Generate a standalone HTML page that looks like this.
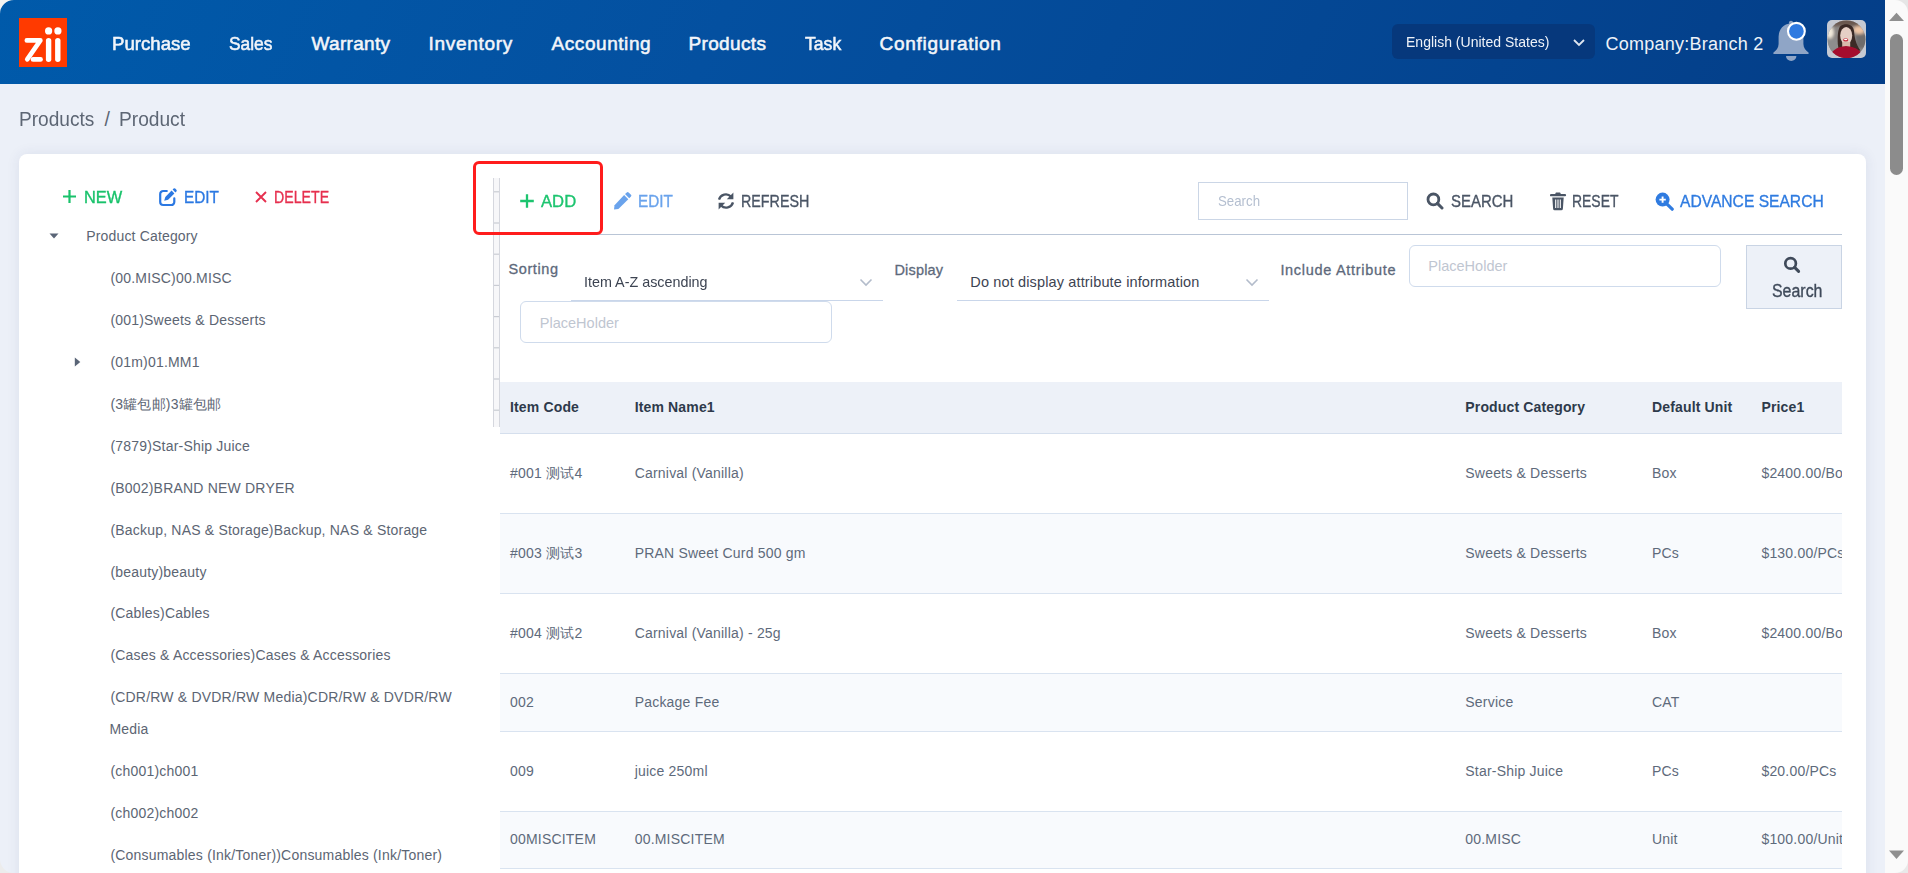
<!DOCTYPE html><html><head><meta charset="utf-8"><title>Product</title><style>
html,body{margin:0;padding:0;width:1908px;height:873px;overflow:hidden;background:#ecf0f8;font-family:"Liberation Sans",sans-serif}
.t{position:absolute;white-space:pre;line-height:normal}
.b{position:absolute;box-sizing:border-box}
</style></head><body>
<div class="b" style="left:0px;top:0px;width:1885px;height:84px;background:linear-gradient(115deg,#005aaa 0%,#0450a0 38%,#043e88 100%)"></div>
<svg class="b" style="left:0px;top:0px" width="14" height="14" viewBox="0 0 14 14"><path d="M0 0H14A14 14 0 0 0 0 14Z" fill="#f4f4f2"/></svg>
<div class="b" style="left:19px;top:18px;width:48px;height:49px;background:#ff3a00"></div>
<svg class="b" style="left:19px;top:18px" width="48" height="49" viewBox="0 0 48 49"><g fill="none" stroke="#fff" stroke-linecap="round" stroke-linejoin="round" stroke-width="4.6"><path d="M7.8 22.4H21.4L8.2 41.4"/><path d="M14 41.4H21.6"/><path d="M29.6 22.6V41.2" stroke-width="5.4"/><path d="M38.8 22.6V41.2" stroke-width="5.4"/></g><circle cx="29.6" cy="12.9" r="3.6" fill="#fff"/><circle cx="38.9" cy="12.9" r="3.6" fill="#fff"/></svg>
<div class="t" style="left:111.62px;top:33px;font-size:19px;font-weight:400;color:#f2f5fa;transform:scaleX(0.9809);transform-origin:0 0;-webkit-text-stroke:0.55px">Purchase</div>
<div class="t" style="left:228.90px;top:33px;font-size:19px;font-weight:400;color:#f2f5fa;transform:scaleX(0.9144);transform-origin:0 0;-webkit-text-stroke:0.55px">Sales</div>
<div class="t" style="left:311.50px;top:33px;font-size:19px;font-weight:400;color:#f2f5fa;letter-spacing:0.320px;-webkit-text-stroke:0.55px">Warranty</div>
<div class="t" style="left:428.60px;top:33px;font-size:19px;font-weight:400;color:#f2f5fa;letter-spacing:0.693px;-webkit-text-stroke:0.55px">Inventory</div>
<div class="t" style="left:551.60px;top:33px;font-size:19px;font-weight:400;color:#f2f5fa;letter-spacing:0.551px;-webkit-text-stroke:0.55px">Accounting</div>
<div class="t" style="left:688.40px;top:33px;font-size:19px;font-weight:400;color:#f2f5fa;letter-spacing:0.374px;-webkit-text-stroke:0.55px">Products</div>
<div class="t" style="left:804.70px;top:33px;font-size:19px;font-weight:400;color:#f2f5fa;transform:scaleX(0.9275);transform-origin:0 0;-webkit-text-stroke:0.55px">Task</div>
<div class="t" style="left:879.60px;top:33px;font-size:19px;font-weight:400;color:#f2f5fa;letter-spacing:0.688px;-webkit-text-stroke:0.55px">Configuration</div>
<div class="b" style="left:1392px;top:24px;width:203px;height:35px;background:#06387c;border-radius:6px"></div>
<div class="t" style="left:1405.73px;top:34px;font-size:14.5px;font-weight:400;color:#eef2f8;transform:scaleX(0.9668);transform-origin:0 0">English (United States)</div>
<svg class="b" style="left:1572px;top:38px" width="14" height="10" viewBox="0 0 14 10"><path d="M2 2L7 7L12 2" fill="none" stroke="#dfe6f0" stroke-width="1.8"/></svg>
<div class="t" style="left:1605.60px;top:34px;font-size:18px;font-weight:400;color:#eef2f8;letter-spacing:0.235px">Company:Branch 2</div>
<svg class="b" style="left:1772px;top:19px" width="40" height="44" viewBox="0 0 40 44"><path d="M19 4.6C11.6 4.9 6.8 10.2 6.6 17.6V25C6.5 29 4.2 31.5 1.8 33.3C0.8 34.1 1.2 35 2.4 35H35.6C36.8 35 37.2 34.1 36.2 33.3C33.8 31.5 31.5 29 31.4 25V17.6C31.2 10.2 26.4 4.9 19 4.6Z" fill="#8fa5c6"/><circle cx="19" cy="3.8" r="2.1" fill="#8fa5c6"/><path d="M14 37H24.4A5.2 5 0 0 1 14 37Z" fill="#8fa5c6"/><circle cx="24.4" cy="12.3" r="8.4" fill="#2f7ae0" stroke="#fff" stroke-width="2.1"/></svg>
<div class="b" style="left:1827px;top:20px;width:39px;height:38px;background:#c6cad3;border-radius:5px"></div>
<svg class="b" style="left:1827px;top:20px" width="39" height="38" viewBox="0 0 39 38"><defs><clipPath id="av"><circle cx="19.5" cy="19.3" r="18.9"/></clipPath><filter id="bl" x="-30%" y="-30%" width="160%" height="160%"><feGaussianBlur stdDeviation="1.4"/></filter><filter id="bl2" x="-30%" y="-30%" width="160%" height="160%"><feGaussianBlur stdDeviation="0.55"/></filter></defs><g clip-path="url(#av)"><rect width="39" height="38" fill="#8a8684"/><g filter="url(#bl)"><rect x="-2" y="-2" width="43" height="8" fill="#6a5850"/><ellipse cx="3" cy="12.5" rx="4" ry="6" fill="#f2eadb"/><ellipse cx="32" cy="10" rx="6" ry="4" fill="#f0c6a6"/><rect x="-2" y="19" width="14" height="12" fill="#8e8e8e"/><rect x="29" y="14" width="12" height="14" fill="#6e6c6c"/></g><g filter="url(#bl2)"><path d="M10.8 24C10.5 16 10.8 9 13.5 6C15.5 4.3 18 4 20 4.2C24 4.5 26.5 7 27 11C27.6 17 28.5 24 33.5 30.5L24 32H12Z" fill="#3a2a25"/><ellipse cx="19.2" cy="15.6" rx="6" ry="8.6" fill="#e6d0c6"/><rect x="15.2" y="22" width="8" height="5.5" fill="#d9b9aa"/><ellipse cx="18.7" cy="19.9" rx="2.6" ry="1.7" fill="#c62a3a"/><ellipse cx="18.7" cy="19.5" rx="1.7" ry="0.75" fill="#fff"/><path d="M1 40C3 32 9 26.5 19 26C29 26.5 35 31 38 40Z" fill="#a50f2e"/></g></g></svg>
<div class="b" style="left:1885px;top:0px;width:23px;height:873px;background:#fafafa"></div>
<svg class="b" style="left:1885px;top:0px" width="23" height="873" viewBox="0 0 23 873"><path d="M4 21L11.5 12.8L19 21Z" fill="#8f8f8f"/><rect x="5" y="34" width="13" height="141" rx="6.5" fill="#8c8c8c"/><path d="M4 850.5L11.5 859L19 850.5Z" fill="#8f8f8f"/><path d="M10 0A13 13 0 0 1 23 13V0Z" fill="#e6e6e6"/><path d="M23 860A13 13 0 0 1 10 873H23Z" fill="#e9e9e9"/></svg>
<div class="t" style="left:18.82px;top:108px;font-size:19.5px;font-weight:400;color:#5d6674;transform:scaleX(0.9790);transform-origin:0 0">Products</div>
<div class="t" style="left:104.40px;top:108px;font-size:19.5px;font-weight:400;color:#5d6674">/</div>
<div class="t" style="left:119.02px;top:108px;font-size:19.5px;font-weight:400;color:#5d6674;transform:scaleX(0.9823);transform-origin:0 0">Product</div>
<div class="b" style="left:19px;top:154px;width:1847px;height:746px;background:#fff;border-radius:8px;box-shadow:0 0 14px rgba(40,60,110,.09)"></div>
<svg class="b" style="left:62px;top:189px" width="15" height="15" viewBox="0 0 15 15"><path d="M7.5 1V14M1 7.5H14" stroke="#19c26b" stroke-width="2.2" fill="none"/></svg>
<div class="t" style="left:84.24px;top:188px;font-size:17px;font-weight:400;color:#19c26b;transform:scaleX(0.9633);transform-origin:0 0;-webkit-text-stroke:0.35px">NEW</div>
<svg class="b" style="left:159px;top:188px" width="19" height="19" viewBox="0 0 19 19"><path d="M7.8 3H4.2A3 3 0 0 0 1.2 6V14A3 3 0 0 0 4.2 17H12.3A3 3 0 0 0 15.3 14V10.4" fill="none" stroke="#2b78e2" stroke-width="2.2" stroke-linecap="round"/><path d="M5.2 12.8L6.3 8.9L12.6 2.6L15.4 5.4L9.1 11.7Z" fill="#2b78e2"/><path d="M13.6 1.6L14.6 0.6Q15.4 -0.1 16.2 0.6L17.4 1.8Q18.1 2.6 17.4 3.4L16.4 4.4Z" fill="#2b78e2"/></svg>
<div class="t" style="left:183.80px;top:188px;font-size:17px;font-weight:400;color:#2b78e2;transform:scaleX(0.9025);transform-origin:0 0;-webkit-text-stroke:0.35px">EDIT</div>
<svg class="b" style="left:255px;top:191px" width="12" height="12" viewBox="0 0 12 12"><path d="M1 1L11 11M11 1L1 11" stroke="#e6304f" stroke-width="1.9" fill="none"/></svg>
<div class="t" style="left:273.77px;top:188px;font-size:17px;font-weight:400;color:#e6304f;transform:scaleX(0.8334);transform-origin:0 0;-webkit-text-stroke:0.35px">DELETE</div>
<svg class="b" style="left:49px;top:233px" width="10" height="6" viewBox="0 0 10 6"><path d="M0.5 0.5H9.5L5 5.5Z" fill="#5a6577"/></svg>
<div class="t" style="left:86.30px;top:228px;font-size:14px;font-weight:400;color:#5c6573;letter-spacing:0.157px">Product Category</div>
<div class="t" style="left:110.40px;top:270px;font-size:14px;font-weight:400;color:#5c6573;letter-spacing:0.2px">(00.MISC)00.MISC</div>
<div class="t" style="left:110.40px;top:312px;font-size:14px;font-weight:400;color:#5c6573;letter-spacing:0.2px">(001)Sweets &amp; Desserts</div>
<div class="t" style="left:110.40px;top:354px;font-size:14px;font-weight:400;color:#5c6573;letter-spacing:0.2px">(01m)01.MM1</div>
<div class="t" style="left:110.40px;top:396px;font-size:14px;font-weight:400;color:#5c6573;letter-spacing:0.2px">(3罐包邮)3罐包邮</div>
<div class="t" style="left:110.40px;top:438px;font-size:14px;font-weight:400;color:#5c6573;letter-spacing:0.2px">(7879)Star-Ship Juice</div>
<div class="t" style="left:110.40px;top:480px;font-size:14px;font-weight:400;color:#5c6573;letter-spacing:0.2px">(B002)BRAND NEW DRYER</div>
<div class="t" style="left:110.40px;top:522px;font-size:14px;font-weight:400;color:#5c6573;letter-spacing:0.2px">(Backup, NAS &amp; Storage)Backup, NAS &amp; Storage</div>
<div class="t" style="left:110.40px;top:564px;font-size:14px;font-weight:400;color:#5c6573;letter-spacing:0.2px">(beauty)beauty</div>
<div class="t" style="left:110.40px;top:605px;font-size:14px;font-weight:400;color:#5c6573;letter-spacing:0.2px">(Cables)Cables</div>
<div class="t" style="left:110.40px;top:647px;font-size:14px;font-weight:400;color:#5c6573;letter-spacing:0.2px">(Cases &amp; Accessories)Cases &amp; Accessories</div>
<div class="t" style="left:110.40px;top:689px;font-size:14px;font-weight:400;color:#5c6573;letter-spacing:0.2px">(CDR/RW &amp; DVDR/RW Media)CDR/RW &amp; DVDR/RW</div>
<div class="t" style="left:109.40px;top:721px;font-size:14px;font-weight:400;color:#5c6573;letter-spacing:0.2px">Media</div>
<div class="t" style="left:110.40px;top:763px;font-size:14px;font-weight:400;color:#5c6573;letter-spacing:0.2px">(ch001)ch001</div>
<div class="t" style="left:110.40px;top:805px;font-size:14px;font-weight:400;color:#5c6573;letter-spacing:0.2px">(ch002)ch002</div>
<div class="t" style="left:110.40px;top:847px;font-size:14px;font-weight:400;color:#5c6573;letter-spacing:0.2px">(Consumables (Ink/Toner))Consumables (Ink/Toner)</div>
<svg class="b" style="left:74px;top:357px" width="7" height="10" viewBox="0 0 7 10"><path d="M0.8 0.5V9.5L6.3 5Z" fill="#5a6577"/></svg>
<svg class="b" style="left:493px;top:178px" width="8" height="249" viewBox="0 0 8 249"><rect x="1" y="0" width="5" height="249" fill="#f7f7f9"/><rect x="0" y="0" width="1" height="249" fill="#d5d7de"/><rect x="6" y="0" width="1" height="249" fill="#d5d7de"/><path d="M1 13.8H6" stroke="#c9ccd3" stroke-width="1.2"/><path d="M1 45.0H6" stroke="#c9ccd3" stroke-width="1.2"/><path d="M1 76.2H6" stroke="#c9ccd3" stroke-width="1.2"/><path d="M1 107.4H6" stroke="#c9ccd3" stroke-width="1.2"/><path d="M1 138.6H6" stroke="#c9ccd3" stroke-width="1.2"/><path d="M1 169.8H6" stroke="#c9ccd3" stroke-width="1.2"/><path d="M1 201.0H6" stroke="#c9ccd3" stroke-width="1.2"/><path d="M1 232.2H6" stroke="#c9ccd3" stroke-width="1.2"/></svg>
<svg class="b" style="left:519px;top:193px" width="16" height="16" viewBox="0 0 16 16"><path d="M8 1.2V14.8M1.2 8H14.8" stroke="#1dc46f" stroke-width="2.3" fill="none"/></svg>
<div class="t" style="left:541.40px;top:192px;font-size:17px;font-weight:400;color:#1dc46f;transform:scaleX(0.9799);transform-origin:0 0;-webkit-text-stroke:0.35px">ADD</div>
<svg class="b" style="left:613px;top:191px" width="19" height="19" viewBox="0 0 19 19"><path d="M15.6 1.4L18 3.8A1.2 1.2 0 0 1 18 5.5L16.2 7.3L12 3.1L13.8 1.4A1.2 1.2 0 0 1 15.6 1.4Z" fill="#6aa3ec"/><path d="M11.1 4L15.3 8.2L5.4 18.1L1 18.6L1.5 14.2Z" fill="#6aa3ec"/></svg>
<div class="t" style="left:637.70px;top:192px;font-size:17px;font-weight:400;color:#6aa3ec;transform:scaleX(0.8999);transform-origin:0 0;-webkit-text-stroke:0.35px">EDIT</div>
<svg class="b" style="left:717px;top:192px" width="18" height="18" viewBox="0 0 18 18"><g fill="none" stroke="#4a5565" stroke-width="2.3"><path d="M2 7.6A7.1 7.1 0 0 1 14 4.6"/><path d="M16 10.4A7.1 7.1 0 0 1 4 13.4"/></g><path d="M16.4 0.6V7.2H9.8Z" fill="#4a5565"/><path d="M1.6 17.4V10.8H8.2Z" fill="#4a5565"/></svg>
<div class="t" style="left:741.16px;top:192px;font-size:17px;font-weight:400;color:#4a5565;transform:scaleX(0.8410);transform-origin:0 0;-webkit-text-stroke:0.35px">REFRESH</div>
<div class="b" style="left:1198px;top:182px;width:210px;height:38px;border:1px solid #cbd6e6;background:#fff"></div>
<div class="t" style="left:1218.20px;top:192px;font-size:15px;font-weight:400;color:#b4bfd0;transform:scaleX(0.8838);transform-origin:0 0">Search</div>
<svg class="b" style="left:1426px;top:192px" width="18" height="18" viewBox="0 0 18 18"><circle cx="7.4" cy="7.4" r="5.4" fill="none" stroke="#4a5565" stroke-width="2.8"/><path d="M11.4 11.4L16 16" stroke="#4a5565" stroke-width="3" stroke-linecap="round"/></svg>
<div class="t" style="left:1451.00px;top:192px;font-size:17px;font-weight:400;color:#4a5565;transform:scaleX(0.8797);transform-origin:0 0;-webkit-text-stroke:0.35px">SEARCH</div>
<svg class="b" style="left:1549.5px;top:192px" width="17" height="19" viewBox="0 0 17 19"><path d="M1 3.2H15" stroke="#4a5565" stroke-width="2.2" stroke-linecap="round"/><path d="M5.6 2.6L6.3 1H9.7L10.4 2.6" fill="#4a5565" stroke="#4a5565" stroke-width="1.2"/><path d="M2.3 5.4H13.7L12.9 16.8A1.6 1.6 0 0 1 11.3 18.3H4.7A1.6 1.6 0 0 1 3.1 16.8Z" fill="#4a5565"/><path d="M5.7 7.6V16M8 7.6V16M10.3 7.6V16" stroke="#fff" stroke-width="1.1"/></svg>
<div class="t" style="left:1571.58px;top:192px;font-size:17px;font-weight:400;color:#4a5565;transform:scaleX(0.8193);transform-origin:0 0;-webkit-text-stroke:0.35px">RESET</div>
<svg class="b" style="left:1654.5px;top:192px" width="19" height="19" viewBox="0 0 19 19"><circle cx="7.6" cy="7.6" r="7" fill="#2f7be0"/><path d="M12.3 12.3L17.2 17.2" stroke="#2f7be0" stroke-width="3.2" stroke-linecap="round"/><path d="M7.6 4.4V10.8M4.4 7.6H10.8" stroke="#fff" stroke-width="1.9"/></svg>
<div class="t" style="left:1679.70px;top:192px;font-size:17px;font-weight:400;color:#2f7be0;transform:scaleX(0.9181);transform-origin:0 0;-webkit-text-stroke:0.35px">ADVANCE SEARCH</div>
<div class="b" style="left:500px;top:234px;width:1342px;height:1px;background:#b9c5d6"></div>
<div class="t" style="left:508.60px;top:261px;font-size:14.5px;font-weight:400;color:#5d697b;letter-spacing:0.570px;-webkit-text-stroke:0.3px">Sorting</div>
<div class="t" style="left:584.11px;top:274px;font-size:14.5px;font-weight:400;color:#3d4452;transform:scaleX(0.9891);transform-origin:0 0">Item A-Z ascending</div>
<svg class="b" style="left:859px;top:278px" width="14" height="9" viewBox="0 0 14 9"><path d="M1.5 1.5L7 7L12.5 1.5" fill="none" stroke="#b3bccb" stroke-width="1.6"/></svg>
<div class="b" style="left:571px;top:300px;width:312px;height:1px;background:#c9d6ea"></div>
<div class="t" style="left:894.40px;top:262px;font-size:14.5px;font-weight:400;color:#5d697b;letter-spacing:0.185px;-webkit-text-stroke:0.3px">Display</div>
<div class="t" style="left:970.30px;top:274px;font-size:14.5px;font-weight:400;color:#3d4452;letter-spacing:0.140px">Do not display attribute information</div>
<svg class="b" style="left:1245px;top:278px" width="14" height="9" viewBox="0 0 14 9"><path d="M1.5 1.5L7 7L12.5 1.5" fill="none" stroke="#b3bccb" stroke-width="1.6"/></svg>
<div class="b" style="left:957px;top:300px;width:312px;height:1px;background:#c9d6ea"></div>
<div class="t" style="left:1280.40px;top:262px;font-size:14.5px;font-weight:400;color:#5d697b;letter-spacing:0.692px;-webkit-text-stroke:0.3px">Include Attribute</div>
<div class="b" style="left:1409px;top:245px;width:312px;height:42px;border:1px solid #cfdbec;border-radius:6px;background:#fff"></div>
<div class="t" style="left:1428.20px;top:258px;font-size:14.5px;font-weight:400;color:#bfc6d1;letter-spacing:0.024px">PlaceHolder</div>
<div class="b" style="left:1746px;top:245px;width:96px;height:64px;border:1px solid #c9d4e4;background:#edf1f8"></div>
<svg class="b" style="left:1783px;top:256px" width="19" height="18" viewBox="0 0 19 18"><circle cx="7.6" cy="7.4" r="5.3" fill="none" stroke="#3f4a5a" stroke-width="2.7"/><path d="M11.6 11.4L15.6 15.4" stroke="#3f4a5a" stroke-width="3" stroke-linecap="round"/></svg>
<div class="t" style="left:1771.50px;top:281px;font-size:17.5px;font-weight:400;color:#3f4a5a;transform:scaleX(0.9102);transform-origin:0 0;-webkit-text-stroke:0.35px">Search</div>
<div class="b" style="left:520px;top:301px;width:312px;height:42px;border:1px solid #cfdbec;border-radius:6px;background:#fff"></div>
<div class="t" style="left:539.70px;top:315px;font-size:14.5px;font-weight:400;color:#bfc6d1;letter-spacing:0.024px">PlaceHolder</div>
<div class="b" style="left:473px;top:161px;width:130px;height:74px;border:3px solid #ff1c1c;border-radius:6px"></div>
<div class="b" style="left:500px;top:382px;width:1342px;height:52px;background:#edf1f8;border-bottom:1px solid #d5dfed"></div>
<div class="t" style="left:510.00px;top:399px;font-size:14px;font-weight:700;color:#2e3a4b;letter-spacing:0.15px">Item Code</div>
<div class="t" style="left:634.70px;top:399px;font-size:14px;font-weight:700;color:#2e3a4b;letter-spacing:0.15px">Item Name1</div>
<div class="t" style="left:1465.30px;top:399px;font-size:14px;font-weight:700;color:#2e3a4b;letter-spacing:0.15px">Product Category</div>
<div class="t" style="left:1652.00px;top:399px;font-size:14px;font-weight:700;color:#2e3a4b;letter-spacing:0.15px">Default Unit</div>
<div class="t" style="left:1761.40px;top:399px;font-size:14px;font-weight:700;color:#2e3a4b;letter-spacing:0.15px">Price1</div>
<div class="b" style="left:500px;top:433px;width:1342px;height:440px;overflow:hidden">
<div class="b" style="left:0;top:1px;width:1342px;height:80px;background:#fff;border-bottom:1px solid #d9e3f0"></div>
<div class="t" style="left:10.0px;top:32px;font-size:14px;color:#5e6a7b;letter-spacing:0.2px">#001 测试4</div>
<div class="t" style="left:134.7px;top:32px;font-size:14px;color:#5e6a7b;letter-spacing:0.2px">Carnival (Vanilla)</div>
<div class="t" style="left:965.3px;top:32px;font-size:14px;color:#5e6a7b;letter-spacing:0.2px">Sweets &amp; Desserts</div>
<div class="t" style="left:1152.0px;top:32px;font-size:14px;color:#5e6a7b;letter-spacing:0.2px">Box</div>
<div class="t" style="left:1261.4px;top:32px;font-size:14px;color:#5e6a7b;letter-spacing:0.2px">$2400.00/Box</div>
<div class="b" style="left:0;top:81px;width:1342px;height:80px;background:#f8fafd;border-bottom:1px solid #d9e3f0"></div>
<div class="t" style="left:10.0px;top:112px;font-size:14px;color:#5e6a7b;letter-spacing:0.2px">#003 测试3</div>
<div class="t" style="left:134.7px;top:112px;font-size:14px;color:#5e6a7b;letter-spacing:0.2px">PRAN Sweet Curd 500 gm</div>
<div class="t" style="left:965.3px;top:112px;font-size:14px;color:#5e6a7b;letter-spacing:0.2px">Sweets &amp; Desserts</div>
<div class="t" style="left:1152.0px;top:112px;font-size:14px;color:#5e6a7b;letter-spacing:0.2px">PCs</div>
<div class="t" style="left:1261.4px;top:112px;font-size:14px;color:#5e6a7b;letter-spacing:0.2px">$130.00/PCs</div>
<div class="b" style="left:0;top:161px;width:1342px;height:80px;background:#fff;border-bottom:1px solid #d9e3f0"></div>
<div class="t" style="left:10.0px;top:192px;font-size:14px;color:#5e6a7b;letter-spacing:0.2px">#004 测试2</div>
<div class="t" style="left:134.7px;top:192px;font-size:14px;color:#5e6a7b;letter-spacing:0.2px">Carnival (Vanilla) - 25g</div>
<div class="t" style="left:965.3px;top:192px;font-size:14px;color:#5e6a7b;letter-spacing:0.2px">Sweets &amp; Desserts</div>
<div class="t" style="left:1152.0px;top:192px;font-size:14px;color:#5e6a7b;letter-spacing:0.2px">Box</div>
<div class="t" style="left:1261.4px;top:192px;font-size:14px;color:#5e6a7b;letter-spacing:0.2px">$2400.00/Box</div>
<div class="b" style="left:0;top:241px;width:1342px;height:58px;background:#f8fafd;border-bottom:1px solid #d9e3f0"></div>
<div class="t" style="left:10.0px;top:261px;font-size:14px;color:#5e6a7b;letter-spacing:0.2px">002</div>
<div class="t" style="left:134.7px;top:261px;font-size:14px;color:#5e6a7b;letter-spacing:0.2px">Package Fee</div>
<div class="t" style="left:965.3px;top:261px;font-size:14px;color:#5e6a7b;letter-spacing:0.2px">Service</div>
<div class="t" style="left:1152.0px;top:261px;font-size:14px;color:#5e6a7b;letter-spacing:0.2px">CAT</div>
<div class="b" style="left:0;top:299px;width:1342px;height:80px;background:#fff;border-bottom:1px solid #d9e3f0"></div>
<div class="t" style="left:10.0px;top:330px;font-size:14px;color:#5e6a7b;letter-spacing:0.2px">009</div>
<div class="t" style="left:134.7px;top:330px;font-size:14px;color:#5e6a7b;letter-spacing:0.2px">juice 250ml</div>
<div class="t" style="left:965.3px;top:330px;font-size:14px;color:#5e6a7b;letter-spacing:0.2px">Star-Ship Juice</div>
<div class="t" style="left:1152.0px;top:330px;font-size:14px;color:#5e6a7b;letter-spacing:0.2px">PCs</div>
<div class="t" style="left:1261.4px;top:330px;font-size:14px;color:#5e6a7b;letter-spacing:0.2px">$20.00/PCs</div>
<div class="b" style="left:0;top:379px;width:1342px;height:57px;background:#f8fafd;border-bottom:1px solid #d9e3f0"></div>
<div class="t" style="left:10.0px;top:398px;font-size:14px;color:#5e6a7b;letter-spacing:0.2px">00MISCITEM</div>
<div class="t" style="left:134.7px;top:398px;font-size:14px;color:#5e6a7b;letter-spacing:0.2px">00.MISCITEM</div>
<div class="t" style="left:965.3px;top:398px;font-size:14px;color:#5e6a7b;letter-spacing:0.2px">00.MISC</div>
<div class="t" style="left:1152.0px;top:398px;font-size:14px;color:#5e6a7b;letter-spacing:0.2px">Unit</div>
<div class="t" style="left:1261.4px;top:398px;font-size:14px;color:#5e6a7b;letter-spacing:0.2px">$100.00/Unit</div>
</div>
<svg class="b" style="left:0px;top:859px" width="14" height="14" viewBox="0 0 14 14"><path d="M0 0A14 14 0 0 0 14 14H0Z" fill="#ececec"/></svg>
</body></html>
